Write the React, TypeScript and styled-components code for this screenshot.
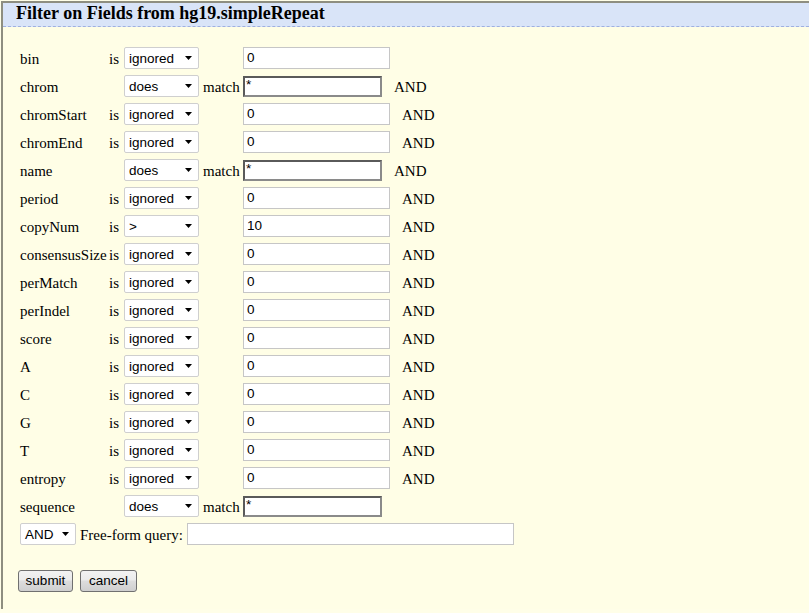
import React from "react";
import styled, { createGlobalStyle } from "styled-components";

const Global = createGlobalStyle`
  html, body { margin: 0; padding: 0; background: #fffee8; }
  body { font-family: "Liberation Serif", "Times New Roman", serif; font-size: 15px; color: #000; }
`;

const Page = styled.div`
  padding: 1px 0 0 1px;
  width: 808px;
  height: 612px;
  background: #fffee8;
`;

const Panel = styled.div`
  border-top: 2px solid #8e8e80;
  border-left: 2px solid #8e8e80;
  height: 608px;
  background: #fffee6;
  box-sizing: border-box;
`;

const Header = styled.div`
  background: #d9e4f8;
  border-bottom: 1px dashed #9fb0e0;
  height: 23px;
  padding-left: 13px;
  font-weight: bold;
  font-size: 18px;
  line-height: 21px;
`;

const Body = styled.div`
  padding: 17px 0 0 17px;
`;

const Row = styled.div`
  display: flex;
  align-items: center;
  height: 28px;
`;

const SerifText = styled.span`
  padding-top: 3px;
`;

const Label = styled(SerifText)`
  width: 89px;
  flex: none;
`;

const Is = styled(SerifText)`
  width: 15px;
  flex: none;
`;

const Select = styled.div<{ $w: number }>`
  box-sizing: border-box;
  width: ${(p) => p.$w}px;
  height: 22px;
  flex: none;
  display: flex;
  align-items: center;
  justify-content: space-between;
  padding: 0 6px 0 4px;
  background: #fff;
  border: 1px solid #cfcfcf;
  border-radius: 2px;
  font-family: "Liberation Sans", Arial, sans-serif;
  font-size: 13.5px;
`;

const Arrow = () => (
  <svg width="7" height="4" viewBox="0 0 7 4">
    <path d="M0 0 L7 0 L3.5 4 Z" fill="#000" />
  </svg>
);

const MatchCell = styled(SerifText)`
  width: 44px;
  flex: none;
  box-sizing: border-box;
  padding-left: 4px;
`;

const TextInput = styled.div<{ $w: number }>`
  box-sizing: border-box;
  width: ${(p) => p.$w}px;
  height: 22px;
  flex: none;
  display: flex;
  align-items: center;
  padding: 0 0 1px 3px;
  background: #fff;
  border: 1px solid #c6c6c6;
  font-family: "Liberation Sans", Arial, sans-serif;
  font-size: 13.5px;
`;

const MatchInput = styled(TextInput)`
  height: 21px;
  border-width: 2px;
  border-style: solid;
  border-color: #5a5a5a #8a8a8a #8a8a8a #5a5a5a;
  padding: 0 0 0 1px;
  align-items: flex-start;
  line-height: 14px;
`;

const And = styled(SerifText)`
  margin-left: 12px;
`;

const FreeRow = styled(Row)`
  gap: 4px;
`;

const Buttons = styled.div`
  display: flex;
  gap: 7px;
  margin: 22px 0 0 -2px;
`;

const Button = styled.button<{ $w: number }>`
  width: ${(p) => p.$w}px;
  height: 22px;
  box-sizing: border-box;
  padding: 0 0 1px;
  border: 1px solid #707070;
  border-radius: 3px;
  background: linear-gradient(#f2f2f2, #ebebeb 45%, #dddddd 50%, #cfcfcf);
  font-family: "Liberation Sans", Arial, sans-serif;
  font-size: 13.5px;
  color: #000;
`;

type Field = { name: string; kind: "num" | "str"; op?: string; val?: string; and?: boolean };

const fields: Field[] = [
  { name: "bin", kind: "num", and: false },
  { name: "chrom", kind: "str" },
  { name: "chromStart", kind: "num" },
  { name: "chromEnd", kind: "num" },
  { name: "name", kind: "str" },
  { name: "period", kind: "num" },
  { name: "copyNum", kind: "num", op: ">", val: "10" },
  { name: "consensusSize", kind: "num" },
  { name: "perMatch", kind: "num" },
  { name: "perIndel", kind: "num" },
  { name: "score", kind: "num" },
  { name: "A", kind: "num" },
  { name: "C", kind: "num" },
  { name: "G", kind: "num" },
  { name: "T", kind: "num" },
  { name: "entropy", kind: "num" },
  { name: "sequence", kind: "str", and: false },
];

export default function App() {
  return (
    <Page>
      <Global />
      <Panel>
        <Header>Filter on Fields from hg19.simpleRepeat</Header>
        <Body>
          {fields.map((f) => (
            <Row key={f.name}>
              <Label>{f.name}</Label>
              <Is>{f.kind === "num" ? "is" : ""}</Is>
              <Select $w={75}>
                <span>{f.kind === "num" ? f.op ?? "ignored" : "does"}</span>
                <Arrow />
              </Select>
              <MatchCell>{f.kind === "str" ? "match" : ""}</MatchCell>
              {f.kind === "num" ? (
                <TextInput $w={147}>{f.val ?? "0"}</TextInput>
              ) : (
                <MatchInput $w={139}>*</MatchInput>
              )}
              {f.and !== false && <And>AND</And>}
            </Row>
          ))}
          <FreeRow>
            <Select $w={56}>
              <span>AND</span>
              <Arrow />
            </Select>
            <SerifText>Free-form query:</SerifText>
            <TextInput $w={327} />
          </FreeRow>
          <Buttons>
            <Button $w={55}>submit</Button>
            <Button $w={57}>cancel</Button>
          </Buttons>
        </Body>
      </Panel>
    </Page>
  );
}
